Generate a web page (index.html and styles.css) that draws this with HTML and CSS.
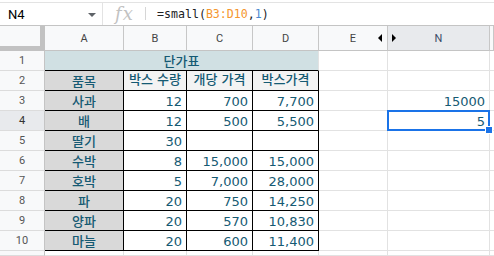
FILE: index.html
```html
<!DOCTYPE html>
<html lang="ko">
<head>
<meta charset="utf-8">
<title>단가표</title>
<link rel="stylesheet" href="styles.css">
</head>
<body>
<div class="fbar">
  <div class="namebox"><span class="ref">N4</span><span class="caret"></span></div>
  <div class="fxbox"><span class="fx">fx</span></div>
  <div class="fsep"></div>
  <div class="formula">=small(<span class="rng">B3:D10</span>,<span class="arg">1</span>)</div>
</div>
<div class="sheet">
  <div class="corner"></div>
  <div class="ch">A</div>
  <div class="ch">B</div>
  <div class="ch">C</div>
  <div class="ch">D</div>
  <div class="ch che">E<span class="tri tri-l"></span></div>
  <div class="ch chn">N<span class="tri tri-r"></span></div>
  <div class="ch"></div>

  <div class="rh">1</div>
  <div class="c title ko">단가표</div>
  <div class="c"></div><div class="c"></div><div class="c"></div>

  <div class="rh">2</div>
  <div class="c bk item ko">품목</div>
  <div class="c bk th ko">박스 수량</div>
  <div class="c bk th ko">개당 가격</div>
  <div class="c bk th ko">박스가격</div>
  <div class="c"></div><div class="c"></div><div class="c"></div>

  <div class="rh">3</div>
  <div class="c bk item ko">사과</div>
  <div class="c bk num">12</div>
  <div class="c bk num">700</div>
  <div class="c bk num">7,700</div>
  <div class="c"></div><div class="c num">15000</div><div class="c"></div>

  <div class="rh rh-sel">4</div>
  <div class="c bk item ko">배</div>
  <div class="c bk num">12</div>
  <div class="c bk num">500</div>
  <div class="c bk num">5,500</div>
  <div class="c"></div><div class="c num sel">5<span class="selbox"><span class="handle"></span></span></div><div class="c"></div>

  <div class="rh">5</div>
  <div class="c bk item ko">딸기</div>
  <div class="c bk num">30</div>
  <div class="c bk num"></div>
  <div class="c bk num"></div>
  <div class="c"></div><div class="c"></div><div class="c"></div>

  <div class="rh">6</div>
  <div class="c bk item ko">수박</div>
  <div class="c bk num">8</div>
  <div class="c bk num">15,000</div>
  <div class="c bk num">15,000</div>
  <div class="c"></div><div class="c"></div><div class="c"></div>

  <div class="rh">7</div>
  <div class="c bk item ko">호박</div>
  <div class="c bk num">5</div>
  <div class="c bk num">7,000</div>
  <div class="c bk num">28,000</div>
  <div class="c"></div><div class="c"></div><div class="c"></div>

  <div class="rh">8</div>
  <div class="c bk item ko">파</div>
  <div class="c bk num">20</div>
  <div class="c bk num">750</div>
  <div class="c bk num">14,250</div>
  <div class="c"></div><div class="c"></div><div class="c"></div>

  <div class="rh">9</div>
  <div class="c bk item ko">양파</div>
  <div class="c bk num">20</div>
  <div class="c bk num">570</div>
  <div class="c bk num">10,830</div>
  <div class="c"></div><div class="c"></div><div class="c"></div>

  <div class="rh">10</div>
  <div class="c bk item ko">마늘</div>
  <div class="c bk num">20</div>
  <div class="c bk num">600</div>
  <div class="c bk num">11,400</div>
  <div class="c"></div><div class="c"></div><div class="c"></div>

  <div class="rh"></div>
  <div class="c"></div><div class="c"></div><div class="c"></div><div class="c"></div>
  <div class="c"></div><div class="c"></div><div class="c"></div>
</div>
</body>
</html>
```
FILE: styles.css
```css
html, body {
  margin: 0;
  padding: 0;
  background: #fff;
  overflow: hidden;
  width: 494px;
  height: 256px;
}

.fbar {
  margin-top: 2px;
  height: 24px;
  box-sizing: border-box;
  border-top: 1px solid #e3e3e3;
  border-bottom: 1px solid #c4c4c4;
  display: flex;
  align-items: stretch;
  font-family: Roboto, "Liberation Sans", sans-serif;
}

.namebox {
  width: 103px;
  box-sizing: border-box;
  border-right: 1px solid #e3e3e3;
  display: flex;
  align-items: center;
  padding-left: 8px;
}

.ref {
  font-size: 13px;
  color: #000;
  flex: 1;
}

.caret {
  width: 0;
  height: 0;
  border-left: 4px solid transparent;
  border-right: 4px solid transparent;
  border-top: 4px solid #5f6368;
  margin-right: 6px;
  margin-top: 2px;
}

.fxbox {
  width: 42px;
  display: flex;
  align-items: center;
  padding-left: 12px;
  box-sizing: border-box;
}

.fx {
  font-family: "DejaVu Serif", serif;
  font-style: italic;
  font-size: 18px;
  color: #c2c2c2;
  letter-spacing: 1px;
  line-height: 1;
}

.fsep {
  width: 1px;
  background: #d6d6d6;
  margin: 4px 0 5px;
}

.formula {
  padding-left: 11px;
  display: flex;
  align-items: center;
  font-family: "DejaVu Sans Mono", "Liberation Mono", monospace;
  font-size: 11.6px;
  color: #202124;
  white-space: pre;
}

.rng { color: #f5962e; }
.arg { color: #4a8ad0; }

.sheet {
  display: grid;
  grid-template-columns: 45px 79px 63px 66px 66px 69px 102px 4px;
  grid-template-rows: 25px repeat(10, 20px) 5px;
  font-family: "DejaVu Sans", "Noto Sans CJK KR", sans-serif;
  font-size: 13px;
  color: #155a73;
  overflow: hidden;
}

.corner {
  background: #f8f9fa;
  box-sizing: border-box;
  border-right: 5px solid #c2c2c2;
  border-bottom: 5px solid #c2c2c2;
}

.ch {
  position: relative;
  background: #f8f9fa;
  box-sizing: border-box;
  border-right: 1px solid #c7c7c7;
  border-bottom: 1px solid #c4c4c4;
  font-family: Roboto, "Liberation Sans", sans-serif;
  font-size: 11px;
  color: #444;
  display: flex;
  align-items: center;
  justify-content: center;
}

.chn {
  background: #e8eaed;
  color: #3c4a68;
}

.tri {
  position: absolute;
  top: 8px;
  width: 0;
  height: 0;
  border-top: 4px solid transparent;
  border-bottom: 4px solid transparent;
}

.tri-l {
  right: 5px;
  border-right: 4px solid #000;
}

.tri-r {
  left: 4px;
  border-left: 4px solid #000;
}

.rh {
  background: #f8f9fa;
  box-sizing: border-box;
  border-right: 1px solid #c4c4c4;
  border-bottom: 1px solid #dcdcdc;
  font-family: Roboto, "Liberation Sans", sans-serif;
  font-size: 11px;
  color: #555;
  display: flex;
  align-items: center;
  justify-content: center;
}

.rh-sel {
  background: #e8eaed;
  color: #333;
}

.c {
  position: relative;
  box-sizing: border-box;
  border-right: 1px solid #e2e2e2;
  border-bottom: 1px solid #e2e2e2;
  padding: 3px 3px 0 3px;
  line-height: 15px;
  white-space: nowrap;
}

.ko {
  font-weight: 500;
}

.title {
  grid-column: span 4;
  background: #d0e0e3;
  text-align: center;
  border-bottom-color: #000;
}

.bk {
  border-right-color: #000;
  border-bottom-color: #000;
}

.item {
  background: #d9d9d9;
  text-align: center;
}

.th {
  background: #f3f3f3;
  text-align: center;
  padding-top: 1px;
  padding-left: 0;
  padding-right: 0;
}

.num {
  text-align: right;
  padding-right: 4px;
}

.sel {
  z-index: 2;
}

.selbox {
  position: absolute;
  top: -1px;
  left: -1px;
  right: -1px;
  bottom: -1px;
  border: 2px solid #1a73e8;
}

.handle {
  position: absolute;
  right: -5px;
  bottom: -5px;
  width: 6px;
  height: 6px;
  background: #1a73e8;
  border: 1px solid #fff;
}
```
